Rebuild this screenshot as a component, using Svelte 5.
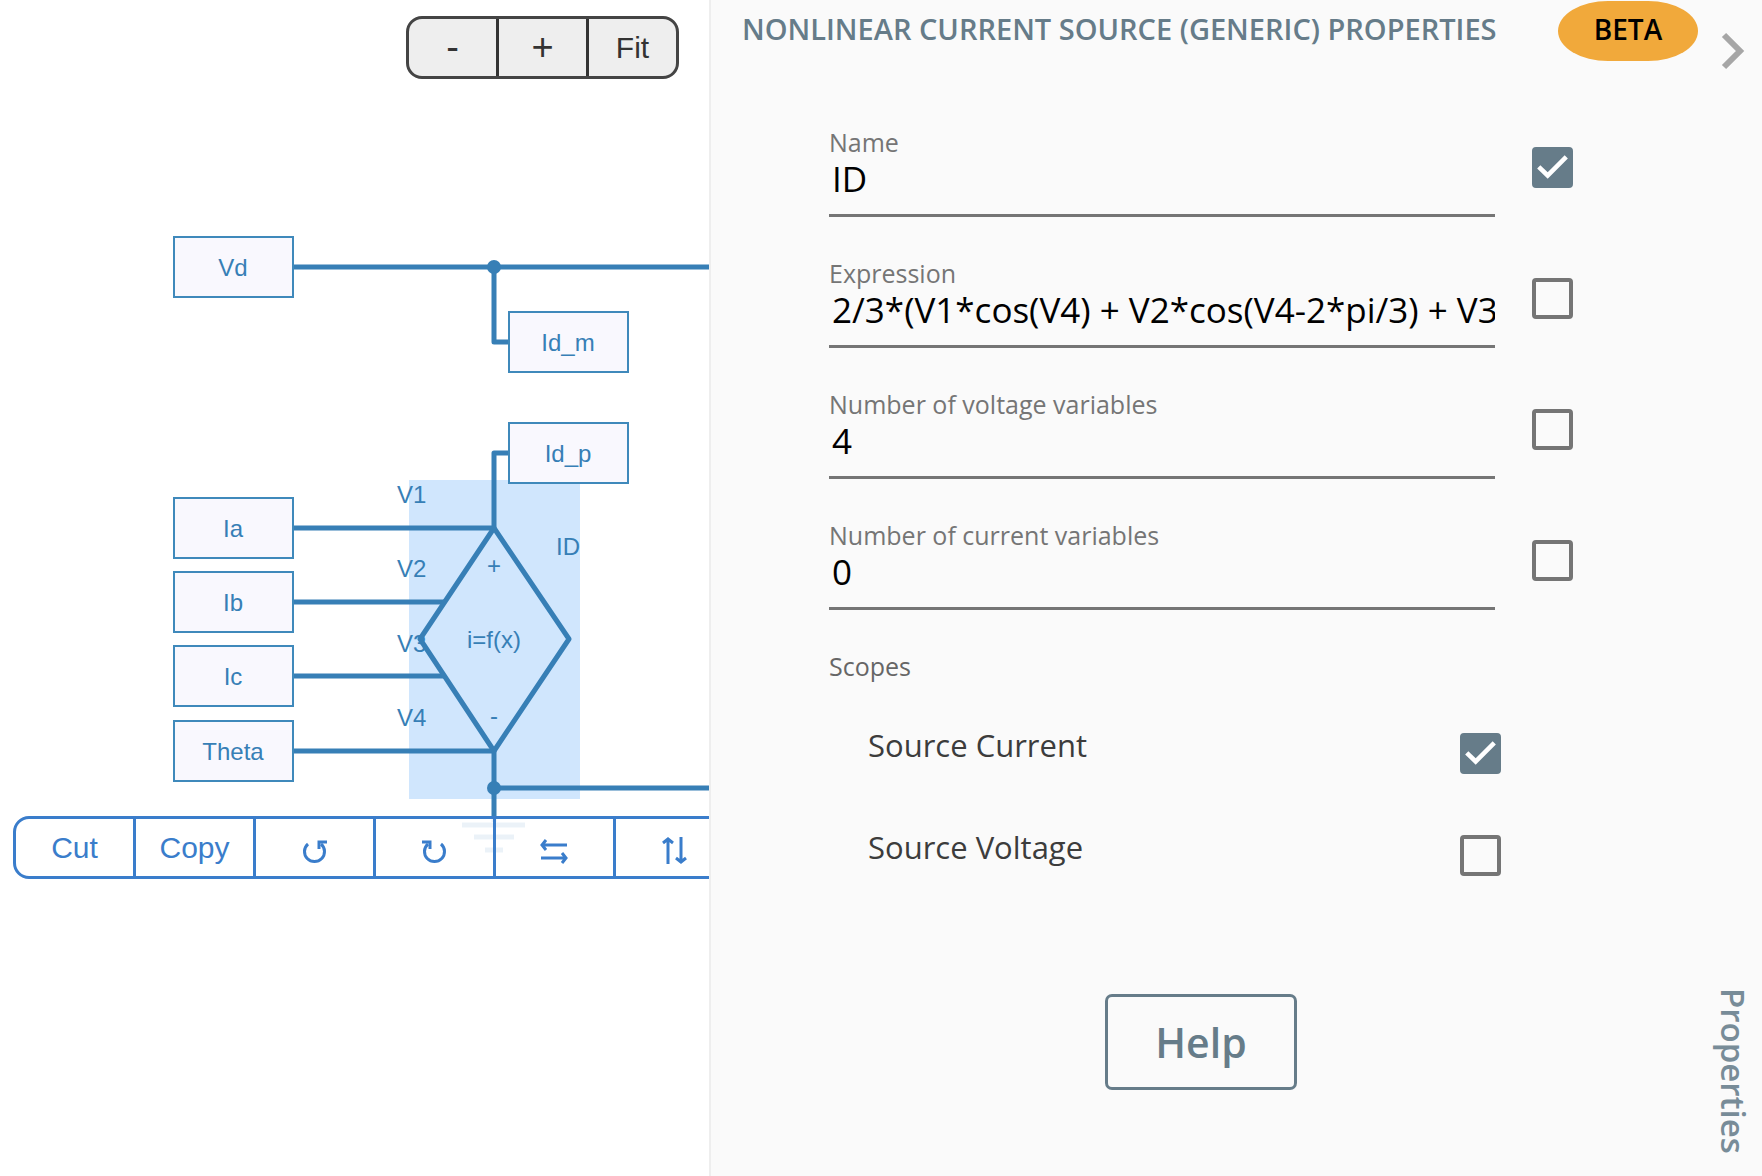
<script lang="ts">
  type Field = { id: string; label: string; value: string; shown: boolean };
  type Scope = { id: string; label: string; on: boolean };

  let fields: Field[] = $state([
    { id: 'name', label: 'Name', value: 'ID', shown: true },
    {
      id: 'expression',
      label: 'Expression',
      value: '2/3*(V1*cos(V4) + V2*cos(V4-2*pi/3) + V3*cos(V4+2*pi/3))',
      shown: false,
    },
    { id: 'voltages', label: 'Number of voltage variables', value: '4', shown: false },
    { id: 'currents', label: 'Number of current variables', value: '0', shown: false },
  ]);

  let scopes: Scope[] = $state([
    { id: 'current', label: 'Source Current', on: true },
    { id: 'voltage', label: 'Source Voltage', on: false },
  ]);

  const tags = [
    { x: 174, y: 237, label: 'Vd' },
    { x: 509, y: 312, label: 'Id_m' },
    { x: 509, y: 423, label: 'Id_p' },
    { x: 174, y: 498, label: 'Ia' },
    { x: 174, y: 572, label: 'Ib' },
    { x: 174, y: 646, label: 'Ic' },
    { x: 174, y: 721, label: 'Theta' },
  ];

  const ports = [
    { y: 503, label: 'V1' },
    { y: 577, label: 'V2' },
    { y: 652, label: 'V3' },
    { y: 726, label: 'V4' },
  ];
</script>

<div class="app">
  <main class="editor">
    <svg class="schematic" width="1762" height="1176">
      <rect class="selection" x="409" y="480" width="171" height="319" />
      <g class="ports">
        {#each ports as port}
          <text x="397" y={port.y}>{port.label}</text>
        {/each}
        <text x="556" y="555">ID</text>
      </g>
      <g class="wires">
        <path d="M294 267H1762M494 267V342H509" />
        <path d="M294 528H494M509 453H494V528" />
        <path d="M294 602H444M294 676H444M294 751H494" />
        <path d="M494 751V822M494 788H1762" />
        <path d="M494 528L569 639L494 751L420 639Z" />
        <path d="M462 825H525M474 837H514M485 850H503" />
      </g>
      <circle cx="494" cy="267" r="7" />
      <circle cx="494" cy="788" r="7" />
      <g class="centered">
        <text x="494" y="574">+</text>
        <text x="494" y="648">i=f(x)</text>
        <text x="494" y="724">-</text>
      </g>
      {#each tags as tag}
        <g class="tag">
          <rect x={tag.x} y={tag.y} width="119" height="60" />
          <text x={tag.x + 59} y={tag.y + 39}>{tag.label}</text>
        </g>
      {/each}
    </svg>

    <div class="zoom-bar">
      <button class="sign">-</button>
      <button class="sign">+</button>
      <button>Fit</button>
    </div>

    <div class="edit-bar">
      <button>Cut</button>
      <button>Copy</button>
      <button aria-label="Rotate left">
        <svg width="32" height="32" viewBox="0 0 32 32">
          <path d="M9 8A10 10 0 1 0 22 8" />
          <path d="M28 6H20V13" />
        </svg>
      </button>
      <button aria-label="Rotate right">
        <svg width="32" height="32" viewBox="0 0 32 32">
          <path d="M22 8A10 10 0 1 1 9 8" />
          <path d="M3 6H11V13" />
        </svg>
      </button>
      <button aria-label="Flip horizontally">
        <svg width="32" height="32" viewBox="0 0 32 32">
          <path d="M28 9H3M7 4L3 9L7 14M2 22H27M23 17L27 22L23 27" />
        </svg>
      </button>
      <button aria-label="Flip vertically">
        <svg width="32" height="32" viewBox="0 0 32 32">
          <path d="M9 28V3M4 7L9 3L14 7M22 1V26M17 22L22 26L27 22" />
        </svg>
      </button>
      <button aria-label="Delete"></button>
    </div>
  </main>

  <aside class="panel">
    <div class="content">
      <header>
        <h1>NONLINEAR CURRENT SOURCE (GENERIC) PROPERTIES</h1>
        <span class="beta">BETA</span>
      </header>

      <form>
        {#each fields as field}
          <div class="field">
            <div class="field-main">
              <label for={field.id}>{field.label}</label>
              <input id={field.id} type="text" bind:value={field.value} />
            </div>
            <input
              class="check"
              type="checkbox"
              aria-label="Show {field.label}"
              bind:checked={field.shown}
            />
          </div>
        {/each}

        <fieldset>
          <legend>Scopes</legend>
          {#each scopes as scope}
            <div class="scope">
              <label for={scope.id}>{scope.label}</label>
              <input id={scope.id} class="check" type="checkbox" bind:checked={scope.on} />
            </div>
          {/each}
        </fieldset>

        <button type="button" class="help">Help</button>
      </form>
    </div>

    <div class="rail">
      <button class="collapse" aria-label="Collapse panel">
        <svg width="24" height="38" viewBox="0 0 24 38">
          <path d="M3 3L19 19L3 35" />
        </svg>
      </button>
      <span class="rail-label">Properties</span>
    </div>
  </aside>
</div>

<style>
  :global(body) {
    margin: 0;
    background: #fff;
  }

  .app {
    display: flex;
    height: 100vh;
    overflow: hidden;
    font-family: 'Open Sans', 'Noto Sans', sans-serif;
  }

  button {
    padding: 0;
    font: inherit;
    color: inherit;
    cursor: pointer;
  }

  .editor {
    position: relative;
    flex: 1;
    min-width: 0;
    overflow: hidden;
    font-family: 'Liberation Sans', Arial, sans-serif;
  }

  .schematic {
    position: absolute;
    top: 0;
    left: 0;
    font-size: 24px;
    fill: #377fb6;
  }

  .selection {
    fill: #d0e6fd;
  }

  .wires {
    fill: none;
    stroke: #377fb6;
    stroke-width: 5;
    stroke-linejoin: round;
  }

  .tag rect {
    fill: #f9f8fe;
    stroke: #3f89bb;
    stroke-width: 2;
  }

  .tag text,
  .centered text {
    text-anchor: middle;
  }

  /* both toolbars float over the canvas */
  .zoom-bar,
  .edit-bar {
    position: absolute;
    display: flex;
    box-sizing: border-box;
    height: 63px;
    border: 3px solid;
    border-radius: 16px;
    font-size: 30px;
    overflow: hidden;
  }

  .zoom-bar {
    top: 16px;
    right: 30px;
    border-color: #444;
    background: #eee;
    color: #333;
  }

  .edit-bar {
    top: 816px;
    left: 13px;
    border-color: #3a7dcb;
    background: rgba(255, 255, 255, 0.9);
    color: #3a7dcb;
  }

  .zoom-bar button,
  .edit-bar button {
    display: flex;
    align-items: center;
    justify-content: center;
    flex-shrink: 0;
    box-sizing: border-box;
    border: 0;
    border-right: 3px solid;
    background: none;
  }

  .zoom-bar button {
    width: 90px;
  }

  .zoom-bar .sign {
    font-size: 38px;
  }

  .edit-bar button {
    width: 120px;
  }

  .zoom-bar button:last-child,
  .edit-bar button:last-child {
    width: 87px;
    border-right: 0;
  }

  .edit-bar svg {
    margin-top: 8px;
    fill: none;
    stroke: currentColor;
    stroke-width: 3;
  }

  .panel {
    display: flex;
    flex: 0 0 1053px;
    box-sizing: border-box;
    border-left: 2px solid #eee;
    background: #fafafa;
  }

  .content {
    flex: 1;
    min-width: 0;
    padding: 1px 0 0 31px;
  }

  header {
    display: flex;
    justify-content: space-between;
    height: 60px;
  }

  h1 {
    margin: 0;
    font-size: 29px;
    line-height: 56px;
    font-weight: 600;
    white-space: nowrap;
    color: #667c89;
  }

  .beta {
    width: 140px;
    border-radius: 50px / 30px;
    background: #f1a93b;
    color: #000;
    font-size: 28px;
    line-height: 56px;
    font-weight: 600;
    text-align: center;
  }

  form {
    display: flex;
    flex-direction: column;
    padding: 63px 125px 0 87px;
  }

  .field {
    display: flex;
    gap: 37px;
    height: 131px;
  }

  .field-main {
    flex: 1;
    min-width: 0;
    display: flex;
    flex-direction: column;
  }

  .field label,
  legend {
    padding: 0;
    font-size: 25px;
    line-height: 36px;
    color: #757575;
  }

  .field-main input {
    box-sizing: border-box;
    width: 100%;
    height: 57px;
    padding: 0 0 18px 3px;
    border: 0;
    border-bottom: 3px solid #757575;
    border-radius: 0;
    outline: 0;
    background: none;
    color: #000;
    font-family: inherit;
    font-size: 35px;
  }

  .check {
    appearance: none;
    display: grid;
    place-content: center;
    flex-shrink: 0;
    box-sizing: border-box;
    width: 41px;
    height: 41px;
    margin: 23px 0 0;
    border: 4px solid #757575;
    border-radius: 4px;
  }

  .check:checked {
    border-color: #667c89;
    background: #667c89;
  }

  .check:checked::before {
    content: '';
    width: 32px;
    height: 32px;
    background: #fff;
    clip-path: polygon(2% 53%, 12% 43%, 35% 65%, 88% 12%, 98% 22%, 35% 85%);
  }

  fieldset {
    min-width: 0;
    margin: 0;
    padding: 0 72px 0 39px;
    border: 0;
  }

  legend {
    margin: 3px 0 26px -39px;
    color: #666;
  }

  .scope {
    display: flex;
    justify-content: space-between;
    height: 102px;
  }

  .scope label {
    font-size: 31px;
    line-height: 70px;
    color: #3c3c3c;
  }

  .help {
    align-self: center;
    width: 192px;
    height: 96px;
    margin-top: 80px;
    border: 3px solid #667c89;
    border-radius: 7px;
    background: none;
    color: #667c89;
    font-size: 41px;
    line-height: 84px;
    font-weight: 600;
  }

  .rail {
    display: flex;
    flex-direction: column;
    align-items: center;
    justify-content: space-between;
    width: 64px;
    padding: 32px 0 22px 6px;
    box-sizing: border-box;
  }

  .collapse {
    border: 0;
    background: none;
  }

  .collapse svg {
    display: block;
    fill: none;
    stroke: #a6a6a6;
    stroke-width: 6;
  }

  .rail-label {
    writing-mode: vertical-rl;
    font-size: 33px;
    font-weight: 600;
    color: #788c98;
  }
</style>
